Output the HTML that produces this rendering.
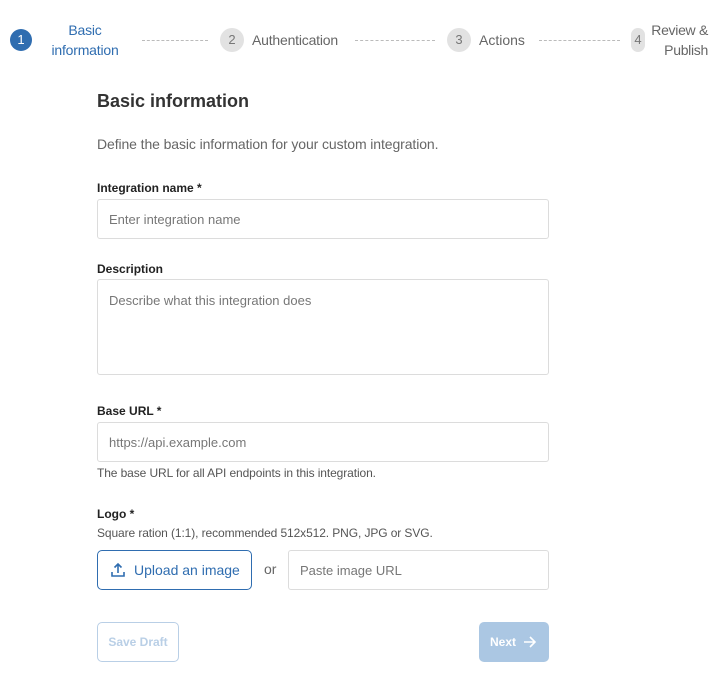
<!DOCTYPE html><html><head><style>
*{box-sizing:border-box;margin:0;padding:0}
body{width:716px;height:674px;background:#fff;font-family:"Liberation Sans",Arial,sans-serif;position:relative;overflow:hidden;color:#222}
.a{position:absolute;white-space:nowrap}
.c{position:absolute;border-radius:12px;background:#e2e2e2;color:#777;font-size:13px;text-align:center;line-height:24px;width:24px;height:24px}
.d{position:absolute;top:40px;height:0;border-top:1px dashed #bbb}
.st{font-size:14px;color:#666}
.lbl{font-size:12px;font-weight:bold;color:#222}
.in{position:absolute;left:97px;width:452px;border:1px solid #dcdcdc;border-radius:3px;font-size:13px;color:#777;padding-left:11px}
.h{font-size:12px;color:#555}
</style></head><body>
<div class="c" style="left:10px;top:29px;width:22px;height:22px;line-height:22px;background:#2f6db0;color:#fff">1</div>
<div class="a st" style="left:44px;top:20px;width:82px;text-align:center;color:#2f6db0;line-height:20px;white-space:normal;letter-spacing:-0.2px">Basic information</div>
<div class="d" style="left:142px;width:66px"></div>
<div class="c" style="left:220px;top:28px">2</div>
<div class="a st" style="left:252px;top:32px;letter-spacing:-0.2px">Authentication</div>
<div class="d" style="left:355px;width:80px"></div>
<div class="c" style="left:447px;top:28px">3</div>
<div class="a st" style="left:479px;top:32px">Actions</div>
<div class="d" style="left:539px;width:81px"></div>
<div class="c" style="left:631px;top:28px;width:14px;border-radius:7px">4</div>
<div class="a st" style="left:646px;top:20px;width:62px;text-align:right;line-height:20px;white-space:normal;letter-spacing:-0.3px">Review &amp; Publish</div>

<div class="a" style="left:97px;top:91px;font-size:18px;font-weight:bold;color:#333">Basic information</div>
<div class="a" style="left:97px;top:136px;font-size:14px;color:#666;letter-spacing:-0.1px">Define the basic information for your custom integration.</div>
<div class="a lbl" style="left:97px;top:181px">Integration name *</div>
<div class="in" style="top:199px;height:40px;line-height:40px">Enter integration name</div>
<div class="a lbl" style="left:97px;top:262px">Description</div>
<div class="in" style="top:279px;height:96px;padding-top:13px">Describe what this integration does</div>
<div class="a lbl" style="left:97px;top:404px">Base URL *</div>
<div class="in" style="top:422px;height:40px;line-height:40px">https://api.example.com</div>
<div class="a h" style="left:97px;top:466px;letter-spacing:-0.1px">The base URL for all API endpoints in this integration.</div>
<div class="a lbl" style="left:97px;top:507px">Logo *</div>
<div class="a h" style="left:97px;top:526px;letter-spacing:-0.1px">Square ration (1:1), recommended 512x512. PNG, JPG or SVG.</div>
<div class="a" style="left:97px;top:550px;width:155px;height:40px;border:1px solid #2f6db0;border-radius:5px;color:#2f6db0;font-size:14px;line-height:38px;padding-left:36px">Upload an image
<svg style="position:absolute;left:12px;top:11px" width="16" height="16" viewBox="0 0 16 16" fill="none" stroke="#2f6db0" stroke-width="1.6"><path d="M8 11V2M4.5 5.5L8 2l3.5 3.5M2 10v4h12v-4"/></svg></div>
<div class="a" style="left:264px;top:561px;font-size:14px;color:#666">or</div>
<div class="in" style="left:288px;width:261px;top:550px;height:40px;line-height:40px">Paste image URL</div>
<div class="a" style="left:97px;top:622px;width:82px;height:40px;border:1px solid #b9cfe6;border-radius:5px;color:#b9cfe6;font-size:12px;font-weight:bold;text-align:center;line-height:38px">Save Draft</div>
<div class="a" style="left:479px;top:622px;width:70px;height:40px;background:#abc7e3;border-radius:5px;color:#fff;font-size:12px;font-weight:bold;line-height:40px;padding-left:11px">Next
<svg style="position:absolute;left:44px;top:14px" width="13" height="12" viewBox="0 0 13 12" fill="none" stroke="#fff" stroke-width="1.6"><path d="M1 6h11M7 1l5 5-5 5"/></svg></div>
</body></html>
